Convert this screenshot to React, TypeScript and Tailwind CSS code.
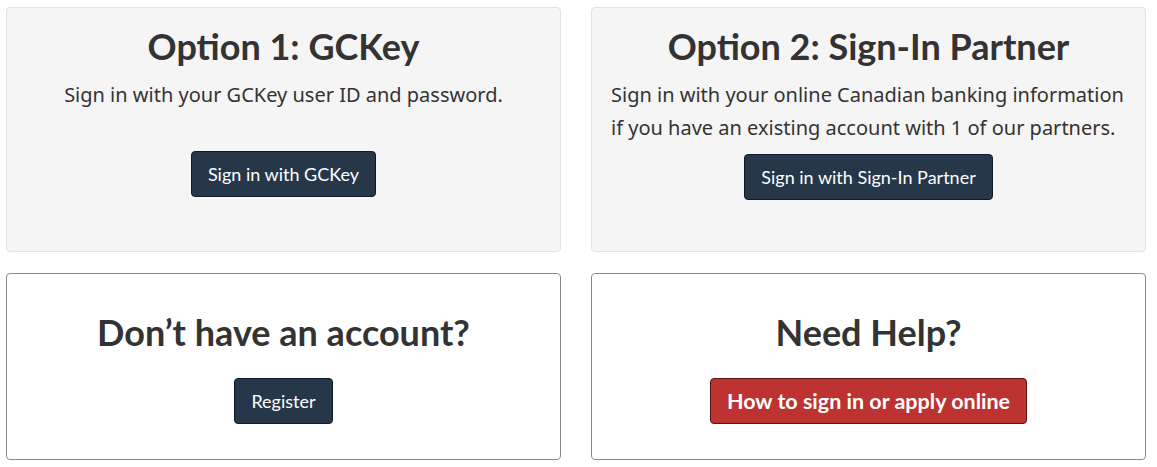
export default function App() {
  return (
    <div className="min-h-screen bg-white pl-[6px] pt-[7px] text-[#333]" style={{ fontFamily: '"Noto Sans", sans-serif' }}>
      <div className="grid grid-cols-[555px_555px] gap-x-[30px] gap-y-[21px]">
        {/* top row */}
        <section className="h-[245px] rounded-[4px] border border-[#e3e3e3] bg-[#f5f5f5] pt-[18px] text-center">
          <h2 className="font-['Lato',sans-serif] text-[36px] font-bold leading-[40px]">Option 1: GCKey</h2>
          <p className="mt-[12px] text-[20px] leading-[33px]">Sign in with your GCKey user ID and password.</p>
          <a className="mt-[40px] inline-flex h-[46px] items-center rounded-[4px] border border-[#091c2d] bg-[#26374a] px-[16px] font-['Lato',sans-serif] text-[18px] text-white">
            Sign in with GCKey
          </a>
        </section>
        <section className="h-[245px] rounded-[4px] border border-[#e3e3e3] bg-[#f5f5f5] px-[19px] pt-[18px] text-center">
          <h2 className="font-['Lato',sans-serif] text-[36px] font-bold leading-[40px]">Option 2: Sign-In Partner</h2>
          <p className="mt-[12px] text-left text-[20px] leading-[33px]">
            Sign in with your online Canadian banking information if you have an existing account with 1 of our partners.
          </p>
          <a className="mt-[10px] inline-flex h-[46px] items-center rounded-[4px] border border-[#091c2d] bg-[#26374a] px-[16px] font-['Lato',sans-serif] text-[18px] text-white">
            Sign in with Sign-In Partner
          </a>
        </section>

        {/* bottom row */}
        <section className="h-[187px] rounded-[4px] border border-[#8a8a8a] bg-white pt-[36px] text-center">
          <h2 className="font-['Lato',sans-serif] text-[36px] font-bold leading-[44px]">Don’t have an account?</h2>
          <a className="mt-[24px] inline-flex h-[46px] items-center rounded-[4px] border border-[#091c2d] bg-[#26374a] px-[16px] font-['Lato',sans-serif] text-[18px] text-white">
            Register
          </a>
        </section>
        <section className="h-[187px] rounded-[4px] border border-[#8a8a8a] bg-white pt-[36px] text-center">
          <h2 className="font-['Lato',sans-serif] text-[36px] font-bold leading-[44px]">Need Help?</h2>
          <a className="mt-[24px] inline-flex h-[46px] items-center rounded-[4px] border border-[#5c1313] bg-[#bc3331] px-[16px] font-['Lato',sans-serif] text-[21.5px] font-bold text-white">
            How to sign in or apply online
          </a>
        </section>
      </div>
    </div>
  );
}
